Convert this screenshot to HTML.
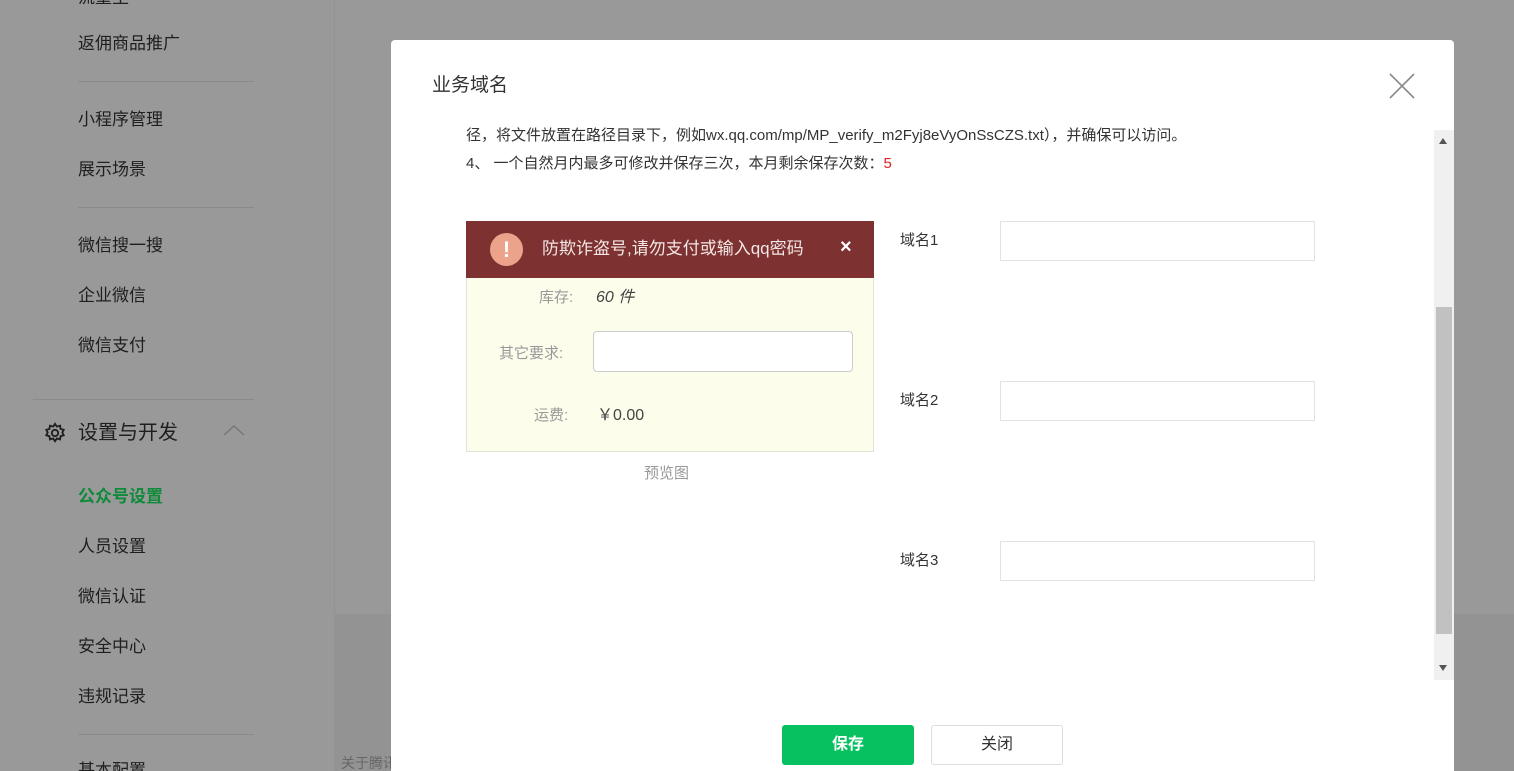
<!DOCTYPE html>
<html style="overflow:hidden"><head><meta charset="utf-8"><style>
*{margin:0;padding:0;box-sizing:border-box}
html,body{width:1514px;height:771px;overflow:hidden}
body{position:relative;background:#939393;font-family:"Liberation Sans","Noto Sans CJK SC",sans-serif;}
.side{position:absolute;left:0;top:0;width:334px;height:771px;background:#999999}
.si{position:absolute;left:78px;font-size:17px;color:#1f1f1f;line-height:20px}
.hr{position:absolute;left:78px;width:176px;height:1px;background:#8a8a8a}
.card{position:absolute;left:335px;top:0;width:1180px;height:614px;background:#999999}
.modal{position:absolute;left:391px;top:40px;width:1063px;height:740px;background:#fff;border-radius:4px}
.t{position:absolute;font-size:15px;color:#333;line-height:20px}
.inp{position:absolute;left:609px;width:315px;height:40px;border:1px solid #e2e2e2}
</style></head><body>
<div class="side">
<div class="si" style="top:-12px">流量主</div>
<div class="si" style="top:34px">返佣商品推广</div>
<div class="hr" style="top:81px"></div>
<div class="si" style="top:110px">小程序管理</div>
<div class="si" style="top:160px">展示场景</div>
<div class="hr" style="top:207px"></div>
<div class="si" style="top:236px">微信搜一搜</div>
<div class="si" style="top:286px">企业微信</div>
<div class="si" style="top:336px">微信支付</div>
<div style="position:absolute;left:33px;width:221px;height:1px;background:#8a8a8a;top:399px"></div>
<svg style="position:absolute;left:44px;top:422px" width="22" height="22" viewBox="0 0 24 24" fill="none" stroke="#1f1f1f" stroke-width="2"><circle cx="12" cy="12" r="3.5"/><path d="M12 2l2 3 3.5-1 .5 3.5 3.5 1-1.5 3 1.5 3-3.5 1-.5 3.5-3.5-1-2 3-2-3-3.5 1-.5-3.5-3.5-1 1.5-3-1.5-3 3.5-1 .5-3.5 3.5 1z"/></svg>
<div class="si" style="top:422px;font-size:20px;line-height:22px">设置与开发</div>
<svg style="position:absolute;left:223px;top:424px" width="22" height="12"><path d="M1 11l10-9 10 9" fill="none" stroke="#777" stroke-width="1.5"/></svg>
<div class="si" style="top:487px;color:#0e8a3a;font-weight:bold">公众号设置</div>
<div class="si" style="top:537px">人员设置</div>
<div class="si" style="top:587px">微信认证</div>
<div class="si" style="top:637px">安全中心</div>
<div class="si" style="top:687px">违规记录</div>
<div class="hr" style="top:734px"></div>
<div class="si" style="top:761px">基本配置</div>
</div>
<div class="card"></div>
<div style="position:absolute;left:341px;top:754px;font-size:14px;color:#666;line-height:18px">关于腾讯</div>
<div class="modal">
<div class="t" style="left:41px;top:35px;font-size:19px;line-height:22px">业务域名</div>
<svg style="position:absolute;left:998px;top:33px" width="26" height="26"><path d="M1 1l24 24M25 1L1 25" stroke="#888" stroke-width="1.6"/></svg>
<div class="t" style="left:75px;top:86px;white-space:nowrap">径，将文件放置在路径目录下，例如wx.qq.com/mp/MP_verify_m2Fyj8eVyOnSsCZS.txt），并确保可以访问。</div>
<div class="t" style="left:75px;top:114px">4、 一个自然月内最多可修改并保存三次，本月剩余保存次数：<span style="color:#e02020">5</span></div>
<div style="position:absolute;left:1043px;top:90px;width:20px;height:550px;background:#f0f0f0"></div>
<div style="position:absolute;left:1045px;top:267px;width:16px;height:327px;background:#c1c1c1"></div>
<div style="position:absolute;left:1048px;top:98px;width:0;height:0;border-left:4px solid transparent;border-right:4px solid transparent;border-bottom:6px solid #555"></div>
<div style="position:absolute;left:1048px;top:625px;width:0;height:0;border-left:4px solid transparent;border-right:4px solid transparent;border-top:6px solid #555"></div>
<div style="position:absolute;left:75px;top:181px;width:408px;height:231px;background:#fdfdec;border:1px solid #e4e4d6"></div>
<div style="position:absolute;left:75px;top:181px;width:408px;height:57px;background:#7d3130"></div>
<div style="position:absolute;left:99px;top:193px;width:33px;height:33px;border-radius:50%;background:#eda38b;color:#fff;font-weight:bold;font-size:22px;text-align:center;line-height:33px">!</div>
<div style="position:absolute;left:151px;top:199px;font-size:17px;color:#f3e7e5;line-height:20px">防欺诈盗号,请勿支付或输入qq密码</div>
<div style="position:absolute;left:449px;top:196px;font-size:20px;color:#fff;font-weight:bold;line-height:22px">×</div>
<div style="position:absolute;left:148px;top:249px;font-size:15px;color:#999;line-height:18px">库存:</div>
<div style="position:absolute;left:205px;top:249px;font-size:16px;color:#444;font-style:italic;line-height:18px">60 件</div>
<div style="position:absolute;left:108px;top:305px;font-size:15px;color:#999;line-height:18px">其它要求:</div>
<div style="position:absolute;left:202px;top:291px;width:260px;height:41px;background:#fff;border:1px solid #ccc;border-radius:4px"></div>
<div style="position:absolute;left:143px;top:367px;font-size:15px;color:#999;line-height:18px">运费:</div>
<div style="position:absolute;left:206px;top:367px;font-size:16px;color:#444;line-height:18px">￥0.00</div>
<div class="t" style="left:253px;top:424px;color:#999">预览图</div>
<div class="t" style="left:509px;top:191px">域名1</div>
<div class="inp" style="top:181px"></div>
<div class="t" style="left:509px;top:351px">域名2</div>
<div class="inp" style="top:341px"></div>
<div class="t" style="left:509px;top:511px">域名3</div>
<div class="inp" style="top:501px"></div>
<div style="position:absolute;left:391px;top:685px;width:132px;height:40px;background:#07c160;color:#fff;border-radius:3px;text-align:center;line-height:40px;font-size:16px;font-weight:bold">保存</div>
<div style="position:absolute;left:540px;top:685px;width:132px;height:40px;background:#fff;border:1px solid #ddd;border-radius:3px;text-align:center;line-height:38px;font-size:16px;color:#333">关闭</div>
</div>
</body></html>
